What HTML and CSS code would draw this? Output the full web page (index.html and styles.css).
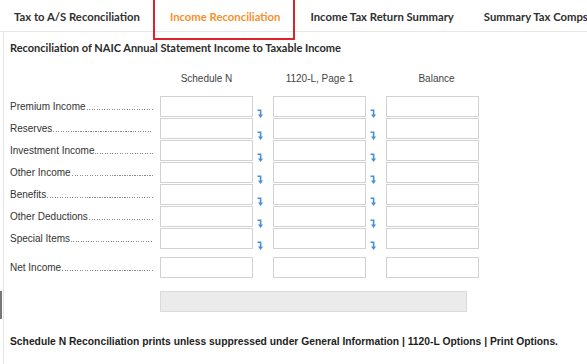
FILE: index.html
```html
<!DOCTYPE html>
<html lang="en">
<head>
  <meta charset="UTF-8" />
  <title>Income Reconciliation</title>
  <link rel="stylesheet" href="styles.css">
</head>
<body>
  <div class="tabs">
    <div class="tab">Tax to A/S Reconciliation</div>
    <div class="tab active">Income Reconciliation</div>
    <div class="tab">Income Tax Return Summary</div>
    <div class="tab-sep"></div>
    <div class="tab">Summary Tax Comps</div>
  </div>

  <div class="panel">
    <div class="scroll-thumb"></div>
    <h2>Reconciliation of NAIC Annual Statement Income to Taxable Income</h2>

    <div class="grid">
      <div></div>
      <div class="col-head">Schedule N</div>
      <div></div>
      <div class="col-head">1120-L, Page 1</div>
      <div></div>
      <div class="col-head shift">Balance</div>
    </div>

    <div class="grid rows" id="rows"></div>

    <div class="grid net">
      <div class="label"><span>Net Income</span><span class="dots"></span></div>
      <div class="box"></div>
      <div></div>
      <div class="box"></div>
      <div></div>
      <div class="box"></div>
    </div>

    <div class="grid">
      <div></div>
      <div class="total"></div>
    </div>

    <p class="note">Schedule N Reconciliation prints unless suppressed under General Information | 1120-L Options | Print Options.</p>
  </div>

  <script>
    const labels = ['Premium Income', 'Reserves', 'Investment Income', 'Other Income', 'Benefits', 'Other Deductions', 'Special Items'];
    const arrow = '<svg class="arrow" width="6" height="9" viewBox="0 0 6 9"><path d="M0.5 1.2H3.6V6" fill="none" stroke="#4a8fd8" stroke-width="1.6"/><path d="M1 5.4H6L3.6 8.9Z" fill="#4a8fd8"/></svg>';
    const rows = document.getElementById('rows');
    labels.forEach(name => {
      rows.innerHTML += `
        <div class="label"><span>${name}</span><span class="dots"></span></div>
        <div class="box"></div>
        <div class="gutter">${arrow}</div>
        <div class="box"></div>
        <div class="gutter">${arrow}</div>
        <div class="box"></div>`;
    });
  </script>
</body>
</html>
```

FILE: styles.css
```css
html, body {
  overflow: hidden;
}
body {
  margin: 0;
  background: #fff;
  font-family: "Liberation Sans", Arial, sans-serif;
  color: #333;
}

.tabs {
  display: flex;
  align-items: center;
  height: 31px;
  border-bottom: 1px solid #e6e6e6;
  white-space: nowrap;
}
.tab {
  position: relative;
  padding: 2px 15px 0;
  font-family: Lato, sans-serif;
  font-weight: 700;
  font-size: 11.3px;
  color: #2f2f2f;
}
.tab:first-child {
  padding-left: 14px;
}
.tab.active {
  color: #f7902b;
}
.tab.active::after {
  content: "";
  position: absolute;
  left: -2px;
  right: 0;
  top: -14px;
  bottom: -17px;
  border: 2px solid #e0232b;
}
.tab-sep {
  width: 1px;
  height: 15px;
  background: #e8e8ef;
}

.panel {
  position: relative;
  margin-left: 3px;
  border-left: 1px solid #e4e4e4;
  padding: 0 0 1px 6px;
  height: 332px;
}
.scroll-thumb {
  position: absolute;
  left: -4px;
  top: 259px;
  width: 2px;
  height: 28px;
  background: #777;
}

h2 {
  margin: 0;
  padding-top: 9px;
  font-family: Lato, sans-serif;
  font-size: 11px;
  font-weight: 700;
  color: #2b2b2b;
}

.grid {
  display: grid;
  grid-template-columns: 150px 93px 20px 93px 20px 93px;
}
.col-head {
  margin-top: 19px;
  margin-bottom: 12px;
  text-align: center;
  font-size: 10px;
  color: #444;
}
.col-head.shift {
  padding-left: 8px;
}

.rows {
  row-gap: 1px;
}
.label {
  display: flex;
  align-items: center;
  padding-right: 7px;
  font-size: 10px;
  color: #333;
  white-space: nowrap;
}
.dots {
  flex: 1;
  height: 1px;
  margin: 6px 0 0 1px;
  background: repeating-linear-gradient(to right, #8a8a8a 0 1px, transparent 1px 2.5px);
}
.box {
  height: 19px;
  border: 1px solid #d2d2d2;
  background: #fff;
}
.gutter {
  display: flex;
  align-items: flex-end;
  padding-left: 4px;
}
.arrow {
  margin-bottom: -1px;
}

.net {
  margin-top: 8px;
}
.total {
  grid-column: 2 / 7;
  width: 305px;
  height: 19px;
  margin-top: 13px;
  border: 1px solid #dadada;
  background: #ebebeb;
}

.note {
  margin: 24px 0 0;
  font-size: 10.3px;
  font-weight: 700;
  color: #1e1e1e;
}
```
